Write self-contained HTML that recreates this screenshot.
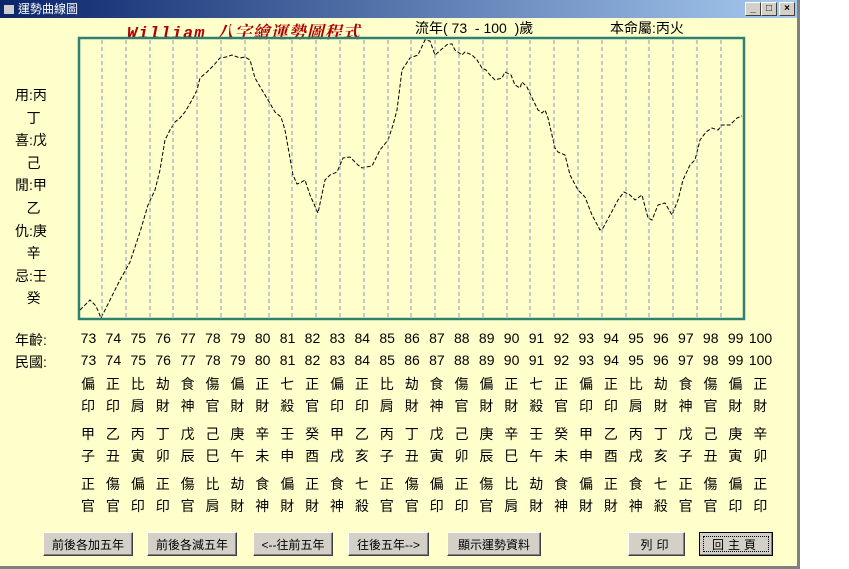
<!DOCTYPE html><html><head><meta charset="utf-8"><style>
body{margin:0;width:849px;height:569px;background:#fff;position:relative;overflow:hidden;font-family:"Liberation Sans","Noto Sans CJK TC",sans-serif;}
#win{position:absolute;left:0;top:0;width:797px;height:566px;background:#FFFFCC;border-right:3px solid #808080;border-bottom:3px solid #808080;box-sizing:content-box}
#tb{position:absolute;left:0;top:0;width:797px;height:18px;background:linear-gradient(90deg,#0A246A,#A6CAF0);color:#fff;font-size:12px;line-height:18px}
.cb{position:absolute;top:2px;width:14px;height:12px;background:#D4D0C8;border:1px solid;border-color:#fff #404040 #404040 #fff;font-size:10px;line-height:12px;text-align:center;color:#000;font-weight:bold}
.a{position:absolute;white-space:nowrap;font-size:14px;color:#000}
.r{position:absolute;left:81px;font-size:14px;letter-spacing:10.9px;white-space:nowrap}
.n{position:absolute;left:76px;font-size:14px;white-space:nowrap}
.n span{display:inline-block;width:24.9px;text-align:center}
.btn{position:absolute;top:532px;height:24px;background:#D4D0C8;border:1px solid;border-color:#fff #404040 #404040 #fff;box-shadow:inset -1px -1px #808080;font-size:12px;line-height:24px;text-align:center;box-sizing:border-box}
</style></head><body>
<div id="win">
<div id="tb"><span style="display:inline-block;width:10px;height:9px;background:#ccc;margin:0 4px 0 4px;vertical-align:-1px"></span>運勢曲線圖
<div class="cb" style="left:745px">_</div><div class="cb" style="left:761px">□</div><div class="cb" style="left:779px">×</div></div>
<div class="a" style="left:127px;top:18px;font-size:17px;color:#B00000;font-style:italic;font-weight:bold;font-family:'Liberation Mono','Noto Serif CJK SC',serif;letter-spacing:1px">William 八字繪運勢圖程式</div>
<div class="a" style="left:415px;top:18px">流年( 73&nbsp; - 100&nbsp; )歲</div>
<div class="a" style="left:610px;top:18px">本命屬:丙火</div>
<svg style="position:absolute;left:0;top:0" width="797" height="330">
<g stroke="#8888bb" stroke-dasharray="4,3" stroke-width="1">
<script></script>
</g>
<g id="vl" stroke="#8890c0" stroke-dasharray="4,3"></g>
<path id="vp" stroke="#8890c0" stroke-dasharray="4,3" fill="none" d=""/>
<rect x="79" y="38" width="665" height="281" fill="none" stroke="#2E8170" stroke-width="2.5"/>
<polyline fill="none" stroke="#000" stroke-width="1" stroke-dasharray="4,2" points="80,310 90,300 96,306 101,318 110,300 120,280 130,262 140,232 148,205 155,190 160,170 165,140 170,130 175,122 180,118 185,112 192,100 197,90 200,78 207,72 213,66 220,58 226,57 232,55 240,58 245,57 250,60 255,78 262,90 268,100 275,112 281,117 285,130 293,175 297,184 300,183 305,180 310,195 318,213 325,180 330,175 337,172 343,158 350,157 358,165 362,168 366,167 372,166 380,150 388,140 393,125 397,110 402,70 410,58 418,55 425,40 430,41 435,55 443,48 448,44 452,44 455,50 462,55 465,52 472,55 477,60 482,68 486,70 490,75 495,80 502,78 505,72 511,75 515,85 520,88 522,82 527,87 533,100 538,110 542,113 545,110 548,118 555,148 558,152 565,155 570,175 578,190 585,197 592,215 600,230 603,228 610,215 618,200 624,192 630,195 635,200 642,195 648,218 652,220 658,205 665,203 672,215 678,200 683,180 690,165 695,160 700,140 706,132 712,128 718,130 722,125 730,125 737,118 742,116"/>
</svg>
<div class="a" style="left:15px;top:84px;line-height:22.6px">用:丙<br>&nbsp;&nbsp; 丁<br>喜:戊<br>&nbsp;&nbsp; 己<br>閒:甲<br>&nbsp;&nbsp; 乙<br>仇:庚<br>&nbsp;&nbsp; 辛<br>忌:壬<br>&nbsp;&nbsp; 癸</div>
<div class="a" style="left:15px;top:330px">年齡:</div>
<div class="a" style="left:15px;top:352px">民國:</div>
<div class="n" style="top:330px"><span>73</span><span>74</span><span>75</span><span>76</span><span>77</span><span>78</span><span>79</span><span>80</span><span>81</span><span>82</span><span>83</span><span>84</span><span>85</span><span>86</span><span>87</span><span>88</span><span>89</span><span>90</span><span>91</span><span>92</span><span>93</span><span>94</span><span>95</span><span>96</span><span>97</span><span>98</span><span>99</span><span>100</span></div>
<div class="n" style="top:352px"><span>73</span><span>74</span><span>75</span><span>76</span><span>77</span><span>78</span><span>79</span><span>80</span><span>81</span><span>82</span><span>83</span><span>84</span><span>85</span><span>86</span><span>87</span><span>88</span><span>89</span><span>90</span><span>91</span><span>92</span><span>93</span><span>94</span><span>95</span><span>96</span><span>97</span><span>98</span><span>99</span><span>100</span></div>
<div class="r" style="top:374px">偏正比劫食傷偏正七正偏正比劫食傷偏正七正偏正比劫食傷偏正</div>
<div class="r" style="top:396px">印印肩財神官財財殺官印印肩財神官財財殺官印印肩財神官財財</div>
<div class="r" style="top:424px">甲乙丙丁戊己庚辛壬癸甲乙丙丁戊己庚辛壬癸甲乙丙丁戊己庚辛</div>
<div class="r" style="top:446px">子丑寅卯辰巳午未申酉戌亥子丑寅卯辰巳午未申酉戌亥子丑寅卯</div>
<div class="r" style="top:474px">正傷偏正傷比劫食偏正食七正傷偏正傷比劫食偏正食七正傷偏正</div>
<div class="r" style="top:496px">官官印印官肩財神財財神殺官官印印官肩財神財財神殺官官印印</div>
<div class="btn" style="left:43px;width:90px">前後各加五年</div>
<div class="btn" style="left:147px;width:90px">前後各減五年</div>
<div class="btn" style="left:253px;width:80px">&lt;--往前五年</div>
<div class="btn" style="left:348px;width:81px">往後五年--&gt;</div>
<div class="btn" style="left:447px;width:94px">顯示運勢資料</div>
<div class="btn" style="left:628px;width:57px;letter-spacing:4px">列印</div>
<div class="btn" style="left:699px;width:74px;border:1px solid #000;letter-spacing:4px"><div style="position:absolute;left:3px;top:3px;right:3px;bottom:3px;border:1px dotted #000"></div>回主頁</div>
</div>
<svg style="position:absolute;left:0;top:0;pointer-events:none" width="797" height="330">
<g stroke="#8890c0" stroke-dasharray="4,3" stroke-width="1">
<line x1="102" y1="40" x2="102" y2="318"/><line x1="126" y1="40" x2="126" y2="318"/><line x1="150" y1="40" x2="150" y2="318"/><line x1="173" y1="40" x2="173" y2="318"/><line x1="197" y1="40" x2="197" y2="318"/><line x1="221" y1="40" x2="221" y2="318"/><line x1="245" y1="40" x2="245" y2="318"/><line x1="269" y1="40" x2="269" y2="318"/><line x1="292" y1="40" x2="292" y2="318"/><line x1="316" y1="40" x2="316" y2="318"/><line x1="340" y1="40" x2="340" y2="318"/><line x1="364" y1="40" x2="364" y2="318"/><line x1="388" y1="40" x2="388" y2="318"/><line x1="411" y1="40" x2="411" y2="318"/><line x1="435" y1="40" x2="435" y2="318"/><line x1="459" y1="40" x2="459" y2="318"/><line x1="483" y1="40" x2="483" y2="318"/><line x1="507" y1="40" x2="507" y2="318"/><line x1="530" y1="40" x2="530" y2="318"/><line x1="554" y1="40" x2="554" y2="318"/><line x1="578" y1="40" x2="578" y2="318"/><line x1="602" y1="40" x2="602" y2="318"/><line x1="626" y1="40" x2="626" y2="318"/><line x1="649" y1="40" x2="649" y2="318"/><line x1="673" y1="40" x2="673" y2="318"/><line x1="697" y1="40" x2="697" y2="318"/><line x1="721" y1="40" x2="721" y2="318"/>
</g></svg>
</body></html>
